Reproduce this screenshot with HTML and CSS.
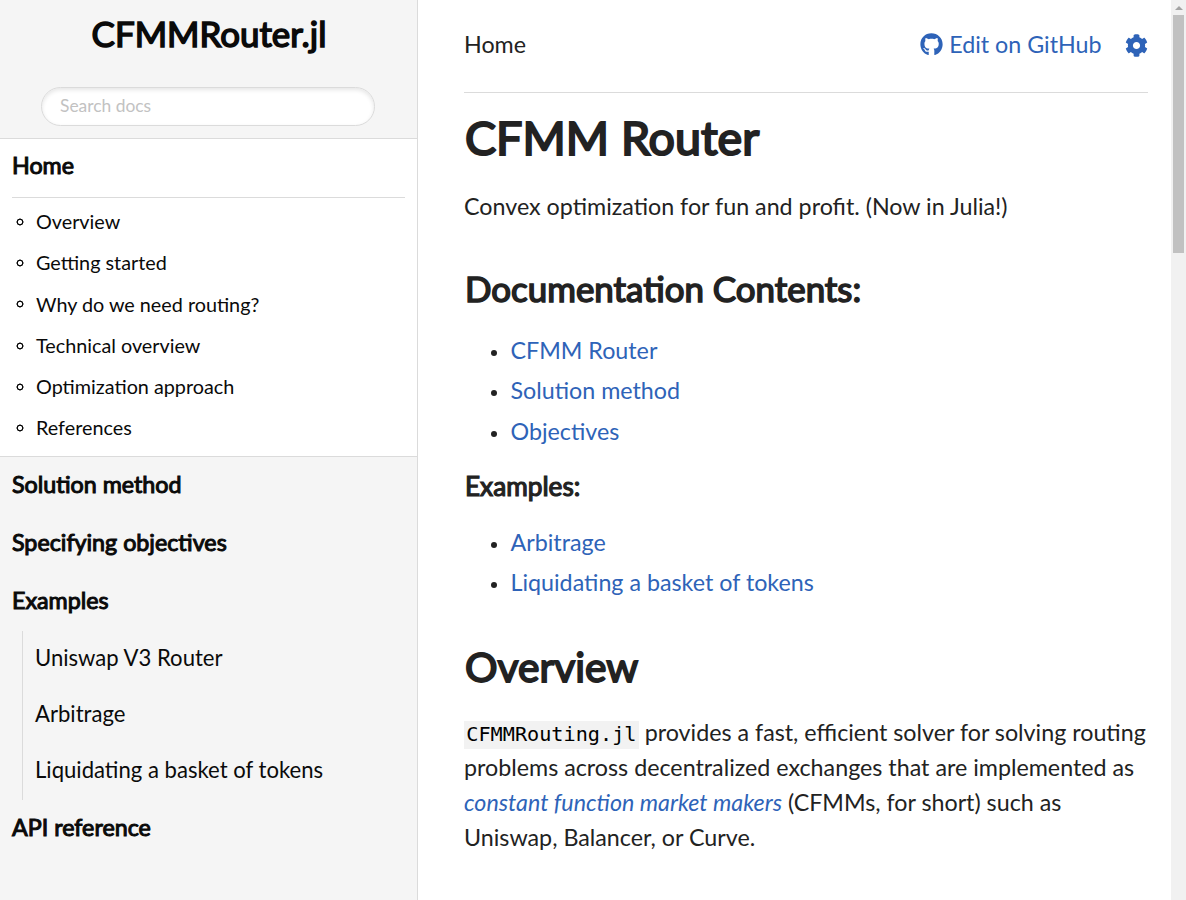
FILE: index.html
```html
<!DOCTYPE html>
<html lang="en">
<head>
<meta charset="utf-8">
<title>Home · CFMMRouter.jl</title>
<link rel="stylesheet" href="styles.css">
</head>
<body>
<div class="page">
  <nav class="sidebar">
    <div class="brand"><a href="#">CFMMRouter.jl</a></div>
    <input class="search" type="text" placeholder="Search docs">
    <ul class="menu">
      <li class="active">
        <a class="entry" href="#">Home</a>
        <ul class="sections">
          <li><a href="#">Overview</a></li>
          <li><a href="#">Getting started</a></li>
          <li><a href="#">Why do we need routing?</a></li>
          <li><a href="#">Technical overview</a></li>
          <li><a href="#">Optimization approach</a></li>
          <li><a href="#">References</a></li>
        </ul>
      </li>
      <li><a class="entry" href="#">Solution method</a></li>
      <li><a class="entry" href="#">Specifying objectives</a></li>
      <li>
        <span class="entry">Examples</span>
        <ul class="submenu">
          <li><a href="#">Uniswap V3 Router</a></li>
          <li><a href="#">Arbitrage</a></li>
          <li><a href="#">Liquidating a basket of tokens</a></li>
        </ul>
      </li>
      <li><a class="entry" href="#">API reference</a></li>
    </ul>
  </nav>
  <main class="main">
    <header class="topbar">
      <span class="crumb">Home</span>
      <a class="edit" href="#"><svg class="github" viewBox="0 0 496 512"><path d="M165.9 397.4c0 2-2.3 3.6-5.2 3.6-3.3.3-5.6-1.3-5.6-3.6 0-2 2.3-3.6 5.2-3.6 3-.3 5.6 1.3 5.6 3.6zM244.800 8C106.100 8 0 113.300 0 252c0 110.900 69.800 205.800 169.500 239.200 12.800 2.300 17.300-5.600 17.300-12.100 0-6.200-.3-40.400-.3-61.400 0 0-70 15-84.700-29.800 0 0-11.400-29.100-27.800-36.600 0 0-22.900-15.700 1.600-15.400 0 0 24.900 2 38.600 25.800 21.900 38.600 58.600 27.500 72.900 20.900 2.300-16 8.800-27.100 16-33.700-55.900-6.200-112.300-14.300-112.300-110.500 0-27.500 7.600-41.300 23.600-58.900-2.600-6.500-11.100-33.300 2.600-67.900 20.900-6.500 69 27 69 27 20-5.600 41.500-8.500 62.800-8.500s42.800 2.900 62.800 8.500c0 0 48.100-33.600 69-27 13.700 34.700 5.200 61.400 2.600 67.900 16 17.700 25.800 31.500 25.800 58.900 0 96.500-58.900 104.200-114.800 110.500 9.200 7.900 17 22.900 17 46.400 0 33.700-.3 75.400-.3 83.600 0 6.500 4.600 14.400 17.300 12.100C428.200 457.800 496 362.900 496 252 496 113.300 383.500 8 244.800 8z"/></svg><span>Edit on GitHub</span></a>
      <svg class="gear" viewBox="0 0 512 512"><path d="M487.400 315.700l-42.600-24.600c4.300-23.200 4.300-47 0-70.200l42.600-24.600c4.900-2.800 7.100-8.600 5.500-14-11.100-35.600-30-67.800-54.700-94.600-3.800-4.100-10-5.100-14.800-2.300L380.800 110c-17.900-15.400-38.500-27.300-60.800-35.100V25.800c0-5.600-3.900-10.500-9.400-11.700-36.700-8.200-74.300-7.800-109.200 0-5.500 1.200-9.400 6.100-9.400 11.700V75c-22.200 7.900-42.800 19.800-60.800 35.100L88.700 85.500c-4.900-2.800-11-1.900-14.800 2.300-24.700 26.700-43.600 58.900-54.700 94.600-1.700 5.400.6 11.200 5.500 14L67.300 221c-4.300 23.200-4.300 47 0 70.200l-42.600 24.600c-4.900 2.800-7.100 8.600-5.500 14 11.100 35.600 30 67.800 54.700 94.600 3.800 4.100 10 5.100 14.800 2.300l42.600-24.600c17.900 15.400 38.500 27.300 60.800 35.100v49.200c0 5.600 3.900 10.500 9.400 11.700 36.700 8.200 74.300 7.800 109.200 0 5.500-1.200 9.400-6.100 9.400-11.700v-49.200c22.200-7.900 42.800-19.800 60.800-35.100l42.600 24.600c4.900 2.800 11 1.900 14.800-2.300 24.700-26.700 43.600-58.900 54.700-94.600 1.500-5.500-.7-11.300-5.600-14.100zM256 336c-44.100 0-80-35.900-80-80s35.900-80 80-80 80 35.900 80 80-35.900 80-80 80z"/></svg>
    </header>
    <article class="content">
      <h1>CFMM Router</h1>
      <p>Convex optimization for fun and profit. (Now in Julia!)</p>
      <h2 class="contents-title">Documentation Contents:</h2>
      <ul>
        <li><a href="#">CFMM Router</a></li>
        <li><a href="#">Solution method</a></li>
        <li><a href="#">Objectives</a></li>
      </ul>
      <h3>Examples:</h3>
      <ul>
        <li><a href="#">Arbitrage</a></li>
        <li><a href="#">Liquidating a basket of tokens</a></li>
      </ul>
      <h2 class="overview-title">Overview</h2>
      <p><code>CFMMRouting.jl</code> provides a fast, efficient solver for solving routing problems across decentralized exchanges that are implemented as <a href="#"><em>constant function market makers</em></a> (CFMMs, for short) such as Uniswap, Balancer, or Curve.</p>
    </article>
  </main>
  <div class="scrollbar"><div class="arrow"></div><div class="thumb"></div></div>
</div>
</body>
</html>
```
FILE: styles.css
```css
*, *::before { box-sizing: border-box; }
body {
  margin: 0;
  font-family: Lato, sans-serif;
  font-size: 23.28px;
  line-height: 35px;
  color: #222;
  background: #fff;
  overflow: hidden;
}
a { color: #2e63b8; text-decoration: none; }
ul { list-style: none; margin: 0; padding: 0; }
h1, h2, h3, p { margin: 0; }
h1, h2, h3, .brand, .entry { font-weight: 400; -webkit-text-stroke: 0.045em currentColor; }
h1, h2, h3 { padding-left: 1px; }

.page { display: flex; width: 1186px; height: 900px; }

.sidebar {
  width: 418px;
  flex: none;
  background: #f5f5f5;
  border-right: 1px solid #dbdbdb;
  color: #0a0a0a;
}
.sidebar a { color: #0a0a0a; }
.brand { padding: 7px 0 0 1px; height: 87px; text-align: center; font-size: 34.9px; line-height: 54px; }
.search {
  display: block;
  width: 334px;
  height: 39px;
  margin: 0 0 12px 41px;
  padding: 0 18px 2px;
  border: 1px solid #dbdbdb;
  border-radius: 20px;
  background: #fff;
  box-shadow: inset 0 2px 4px rgba(10, 10, 10, 0.1);
  font: 17.4px Lato, sans-serif;
  outline: none;
}
.search::placeholder { color: #c2c2c2; opacity: 1; }
.entry { display: block; height: 58px; padding: 9.5px 12px 0; }
.active { height: 319px; background: #fff; border: solid #dbdbdb; border-width: 1px 0; }
.active .entry { padding-top: 8.6px; }
.sections { margin: 0 12px; padding-top: 3.2px; border-top: 1px solid #dbdbdb; }
.sections li {
  display: flex;
  align-items: center;
  height: 41.2px;
  font-size: 19.8px;
}
.sections li::before {
  content: "";
  width: 8px;
  height: 8px;
  margin: 0.6px 12px 0 4px;
  background: radial-gradient(circle, transparent 1.8px, #0a0a0a 2.4px, #0a0a0a 3.2px, transparent 3.8px);
}
.submenu { height: 169px; margin-left: 22px; border-left: 1px solid #dbdbdb; font-size: 22.1px; }
.submenu li { height: 56px; padding: 9px 12px 0; }

.main { width: 753px; flex: none; padding: 0 23px 0 46px; }
.topbar {
  display: flex;
  align-items: center;
  height: 93px;
  padding-bottom: 3px;
  border-bottom: 1px solid #dbdbdb;
}
.crumb { flex: 1; }
.edit { display: flex; align-items: center; }
.github { width: 23px; height: 23px; margin-right: 6.5px; fill: #2e63b8; }
.gear { width: 23px; height: 23px; margin: 1px 0 0 23.4px; fill: #2e63b8; }

h1 { padding-top: 16px; height: 96px; font-size: 46.6px; line-height: 56px; }
.contents-title { padding-top: 43px; height: 109px; font-size: 34.9px; line-height: 44px; }
h3 { padding-top: 16px; height: 70.4px; font-size: 26.2px; line-height: 32px; }
.overview-title { padding-top: 37px; height: 109.6px; font-size: 40.7px; line-height: 50px; }
.content li { position: relative; height: 40.4px; padding-left: 46.5px; }
.content li::before {
  content: "";
  position: absolute;
  left: 27px;
  top: 17px;
  width: 6px;
  height: 6px;
  border-radius: 50%;
  background: #222;
}
code {
  display: inline-block;
  height: 28px;
  padding: 0 2.3px;
  background: #f2f2f2;
  color: #000;
  font: 20.2px/27px "DejaVu Sans Mono", monospace;
}

.scrollbar { width: 15px; flex: none; padding: 0 2px; background: #f1f1f1; }
.arrow { height: 15px; padding: 6px 1.5px; }
.arrow::before { content: ""; display: block; width: 0; border: 4px solid transparent; border-top: 0; border-bottom-color: #a3a3a3; }
.thumb { width: 11px; height: 238px; background: #c1c1c1; }
```
